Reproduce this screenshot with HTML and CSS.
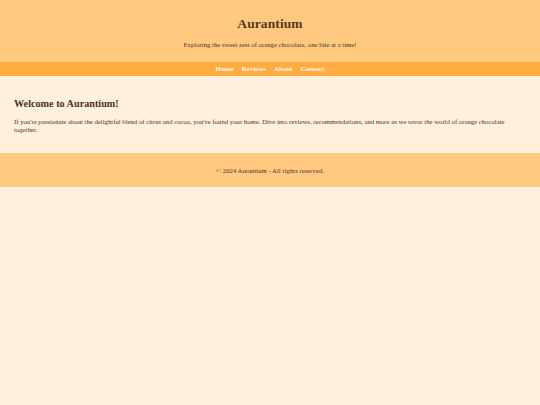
FILE: index.html
```html
<!DOCTYPE html>
<html lang="en">
<head>
<meta charset="utf-8">
<title>Aurantium</title>
<link rel="stylesheet" href="styles.css">
</head>
<body>
<header class="site-header">
  <h1 class="site-title">Aurantium</h1>
  <p class="tagline">Exploring the sweet zest of orange chocolate, one bite at a time!</p>
</header>
<nav class="site-nav">
  <a href="#">Home</a>
  <a href="#">Reviews</a>
  <a href="#">About</a>
  <a href="#">Contact</a>
</nav>
<main class="content">
  <h2 class="welcome">Welcome to Aurantium!</h2>
  <p class="intro">If you're passionate about the delightful blend of citrus and cocoa, you've found your home. Dive into reviews, recommendations, and more as we savor the world of orange chocolate together.</p>
</main>
<footer class="site-footer">
  <p>&copy; 2024 Aurantium - All rights reserved.</p>
</footer>
</body>
</html>
```
FILE: styles.css
```css
html, body {
  margin: 0;
  padding: 0;
}
body {
  background: #fff0dc;
  color: #4e342e;
  font-family: "Liberation Serif", "Times New Roman", serif;
}
.site-header {
  background: #ffca80;
  text-align: center;
  padding: 16px 10px 12px;
  height: 34px;
  box-sizing: content-box;
}
.site-title {
  margin: 0;
  font-size: 13.5px;
  line-height: 16px;
  font-weight: bold;
  color: #5a3620;
  letter-spacing: 0.1px;
}
.tagline {
  margin: 9px 0 0;
  font-size: 6.75px;
  line-height: 8px;
}
.site-nav {
  background: #ffab40;
  height: 14px;
  display: flex;
  justify-content: center;
  align-items: center;
  gap: 8px;
}
.site-nav a {
  color: #fff8ee;
  text-decoration: none;
  font-weight: bold;
  font-size: 7px;
}
.content {
  padding: 21px 14px 19px;
}
.welcome {
  margin: 0 0 7px;
  font-size: 10.2px;
  line-height: 14px;
  font-weight: bold;
  color: #4e2e1e;
}
.intro {
  margin: 0;
  font-size: 6.72px;
  line-height: 8px;
}
.site-footer {
  background: #ffca80;
  height: 34px;
  display: flex;
  align-items: center;
  justify-content: center;
}
.site-footer p {
  margin: 0;
  font-size: 6.75px;
}
```
